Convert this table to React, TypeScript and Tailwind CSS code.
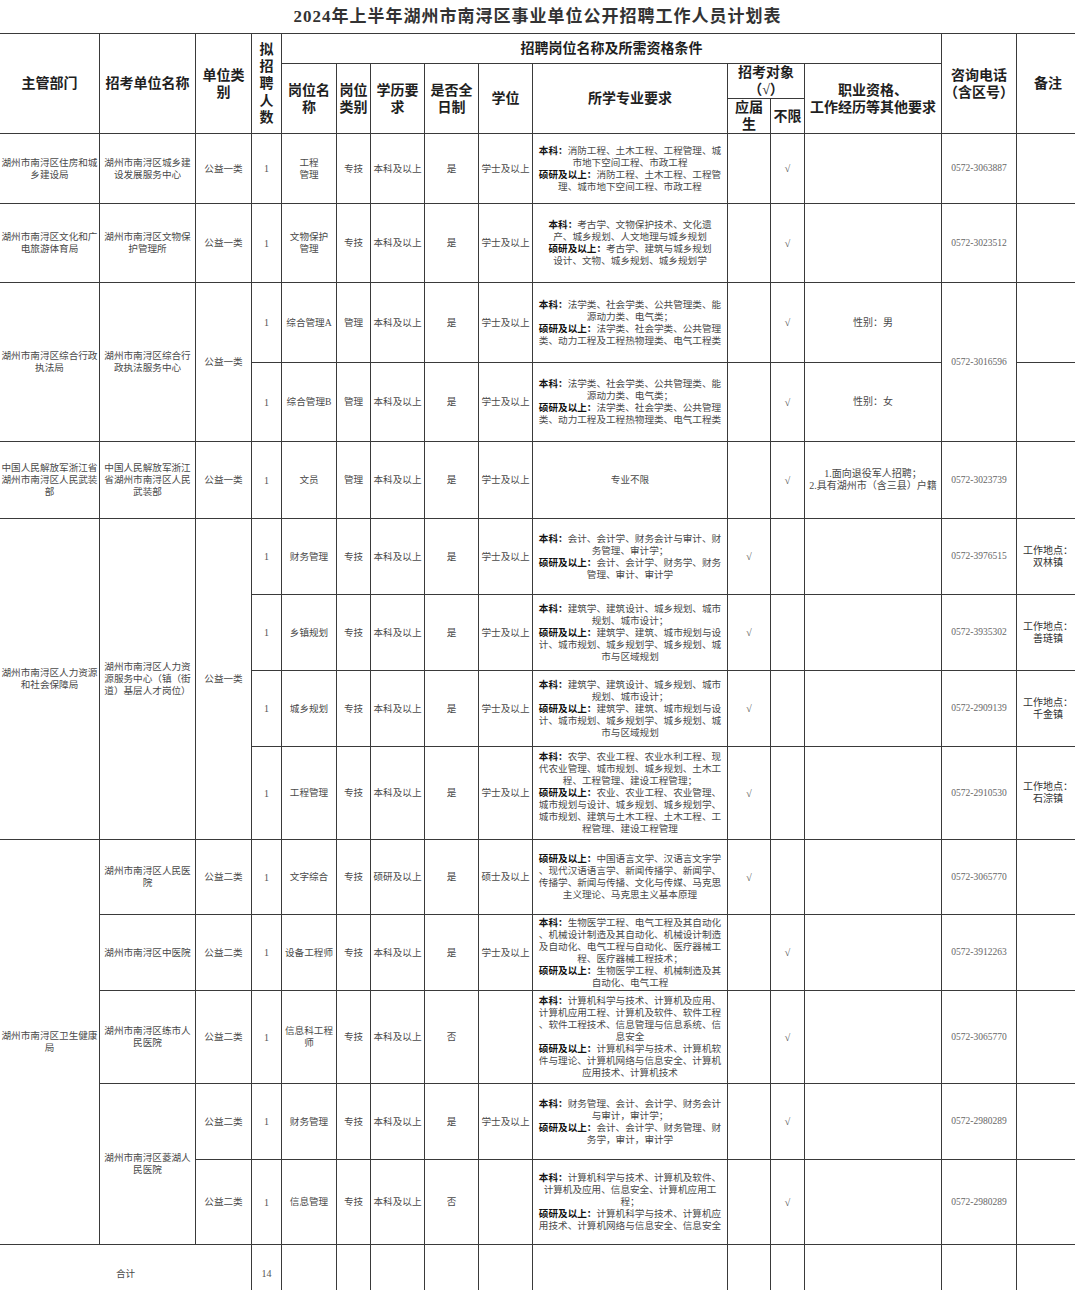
import React from 'react';

const C = 'border border-[#3a3a3a] p-0 text-center align-middle';
const T = C + ' text-[9.6px] leading-[12px] text-[#4a4a4a] whitespace-nowrap';
const H = C + ' text-[14px] leading-[17px] font-bold text-[#1f1f1f] whitespace-nowrap';
const P = C + " text-[9.5px] text-[#666] font-['Liberation_Serif',serif] whitespace-nowrap";
const N = C + " text-[10px] text-[#555] font-['Liberation_Serif',serif]";

function Lines({ lines }: { lines: string[] }) {
  return (
    <>
      {lines.map((l, i) => (
        <div key={i}>{l}</div>
      ))}
    </>
  );
}

function Major({ lines }: { lines: string[] }) {
  return (
    <>
      {lines.map((l, i) => {
        const m = l.match(/^(本科：|硕研及以上：)(.*)$/);
        return (
          <div key={i}>
            {m ? (
              <>
                <span className="font-bold text-[#111]">{m[1]}</span>
                {m[2]}
              </>
            ) : (
              l
            )}
          </div>
        );
      })}
    </>
  );
}

interface JobRow {
  count: string;
  name: string[];
  type: string;
  edu: string;
  fullTime: string;
  degree: string;
  major: string[];
  fresh: boolean;
  other?: string[];
}

function JobCells({ job }: { job: JobRow }) {
  return (
    <>
      <td className={N}>{job.count}</td>
      <td className={T}>
        <Lines lines={job.name} />
      </td>
      <td className={T}>{job.type}</td>
      <td className={T}>{job.edu}</td>
      <td className={T}>{job.fullTime}</td>
      <td className={T}>{job.degree}</td>
      <td className={T}>
        <Major lines={job.major} />
      </td>
      <td className={N}>{job.fresh ? '√' : ''}</td>
      <td className={N}>{job.fresh ? '' : '√'}</td>
      <td className={T + ' text-[10px]'}>{job.other && <Lines lines={job.other} />}</td>
    </>
  );
}

const PLAN_MAJOR = [
  '本科：建筑学、建筑设计、城乡规划、城市',
  '规划、城市设计；',
  '硕研及以上：建筑学、建筑、城市规划与设',
  '计、城市规划、城乡规划学、城乡规划、城',
  '市与区域规划',
];

const ADMIN_MAJOR = [
  '本科：法学类、社会学类、公共管理类、能',
  '源动力类、电气类；',
  '硕研及以上：法学类、社会学类、公共管理',
  '类、动力工程及工程热物理类、电气工程类',
];

export default function App() {
  return (
    <div className="h-[1290px] w-[1075px] overflow-hidden bg-white font-['Liberation_Serif','Noto_Sans_CJK_SC',serif]">
      <div className="flex h-[33px] items-center justify-center text-[17px] font-bold tracking-[1px] text-[#333]">
        2024年上半年湖州市南浔区事业单位公开招聘工作人员计划表
      </div>
      <table className="ml-[-1px] w-[1080px] table-fixed border-collapse">
        <colgroup>
          <col className="w-[100px]" />
          <col className="w-[96px]" />
          <col className="w-[56px]" />
          <col className="w-[30px]" />
          <col className="w-[55px]" />
          <col className="w-[34px]" />
          <col className="w-[54px]" />
          <col className="w-[54px]" />
          <col className="w-[54px]" />
          <col className="w-[195px]" />
          <col className="w-[43px]" />
          <col className="w-[34px]" />
          <col className="w-[137px]" />
          <col className="w-[75px]" />
          <col className="w-[63px]" />
        </colgroup>
        <thead>
          <tr className="h-[30px]">
            <th rowSpan={3} className={H}>主管部门</th>
            <th rowSpan={3} className={H}>招考单位名称</th>
            <th rowSpan={3} className={H}>
              <Lines lines={['单位类', '别']} />
            </th>
            <th rowSpan={3} className={H + ' leading-[16px]'}>
              <Lines lines={['拟', '招', '聘', '人', '数']} />
            </th>
            <th colSpan={9} className={H}>招聘岗位名称及所需资格条件</th>
            <th rowSpan={3} className={H}>
              <Lines lines={['咨询电话', '（含区号）']} />
            </th>
            <th rowSpan={3} className={H}>备注</th>
          </tr>
          <tr className="h-[35px]">
            <th rowSpan={2} className={H}>
              <Lines lines={['岗位名', '称']} />
            </th>
            <th rowSpan={2} className={H}>
              <Lines lines={['岗位', '类别']} />
            </th>
            <th rowSpan={2} className={H}>
              <Lines lines={['学历要', '求']} />
            </th>
            <th rowSpan={2} className={H}>
              <Lines lines={['是否全', '日制']} />
            </th>
            <th rowSpan={2} className={H}>学位</th>
            <th rowSpan={2} className={H}>所学专业要求</th>
            <th colSpan={2} className={H}>
              <Lines lines={['招考对象', '（√）']} />
            </th>
            <th rowSpan={2} className={H}>
              <Lines lines={['职业资格、', '工作经历等其他要求']} />
            </th>
          </tr>
          <tr className="h-[34px]">
            <th className={H}>
              <Lines lines={['应届', '生']} />
            </th>
            <th className={H}>不限</th>
          </tr>
        </thead>
        <tbody>
          <tr className="h-[70px]">
            <td className={T}>
              <Lines lines={['湖州市南浔区住房和城', '乡建设局']} />
            </td>
            <td className={T}>
              <Lines lines={['湖州市南浔区城乡建', '设发展服务中心']} />
            </td>
            <td className={T}>公益一类</td>
            <JobCells
              job={{
                count: '1',
                name: ['工程', '管理'],
                type: '专技',
                edu: '本科及以上',
                fullTime: '是',
                degree: '学士及以上',
                major: [
                  '本科：消防工程、土木工程、工程管理、城',
                  '市地下空间工程、市政工程',
                  '硕研及以上：消防工程、土木工程、工程管',
                  '理、城市地下空间工程、市政工程',
                ],
                fresh: false,
              }}
            />
            <td className={P}>0572-3063887</td>
            <td className={T}></td>
          </tr>
          <tr className="h-[79px]">
            <td className={T}>
              <Lines lines={['湖州市南浔区文化和广', '电旅游体育局']} />
            </td>
            <td className={T}>
              <Lines lines={['湖州市南浔区文物保', '护管理所']} />
            </td>
            <td className={T}>公益一类</td>
            <JobCells
              job={{
                count: '1',
                name: ['文物保护', '管理'],
                type: '专技',
                edu: '本科及以上',
                fullTime: '是',
                degree: '学士及以上',
                major: [
                  '本科：考古学、文物保护技术、文化遗',
                  '产、城乡规划、人文地理与城乡规划',
                  '硕研及以上：考古学、建筑与城乡规划',
                  '设计、文物、城乡规划、城乡规划学',
                ],
                fresh: false,
              }}
            />
            <td className={P}>0572-3023512</td>
            <td className={T}></td>
          </tr>
          <tr className="h-[80px]">
            <td rowSpan={2} className={T}>
              <Lines lines={['湖州市南浔区综合行政', '执法局']} />
            </td>
            <td rowSpan={2} className={T}>
              <Lines lines={['湖州市南浔区综合行', '政执法服务中心']} />
            </td>
            <td rowSpan={2} className={T}>公益一类</td>
            <JobCells
              job={{
                count: '1',
                name: ['综合管理A'],
                type: '管理',
                edu: '本科及以上',
                fullTime: '是',
                degree: '学士及以上',
                major: ADMIN_MAJOR,
                fresh: false,
                other: ['性别：男'],
              }}
            />
            <td rowSpan={2} className={P}>0572-3016596</td>
            <td className={T}></td>
          </tr>
          <tr className="h-[79px]">
            <JobCells
              job={{
                count: '1',
                name: ['综合管理B'],
                type: '管理',
                edu: '本科及以上',
                fullTime: '是',
                degree: '学士及以上',
                major: ADMIN_MAJOR,
                fresh: false,
                other: ['性别：女'],
              }}
            />
            <td className={T}></td>
          </tr>
          <tr className="h-[77px]">
            <td className={T}>
              <Lines lines={['中国人民解放军浙江省', '湖州市南浔区人民武装', '部']} />
            </td>
            <td className={T}>
              <Lines lines={['中国人民解放军浙江', '省湖州市南浔区人民', '武装部']} />
            </td>
            <td className={T}>公益一类</td>
            <JobCells
              job={{
                count: '1',
                name: ['文员'],
                type: '管理',
                edu: '本科及以上',
                fullTime: '是',
                degree: '学士及以上',
                major: ['专业不限'],
                fresh: false,
                other: ['1.面向退役军人招聘；', '2.具有湖州市（含三县）户籍'],
              }}
            />
            <td className={P}>0572-3023739</td>
            <td className={T}></td>
          </tr>
          <tr className="h-[76px]">
            <td rowSpan={4} className={T}>
              <Lines lines={['湖州市南浔区人力资源', '和社会保障局']} />
            </td>
            <td rowSpan={4} className={T}>
              <Lines lines={['湖州市南浔区人力资', '源服务中心（镇（街', '道）基层人才岗位）']} />
            </td>
            <td rowSpan={4} className={T}>公益一类</td>
            <JobCells
              job={{
                count: '1',
                name: ['财务管理'],
                type: '专技',
                edu: '本科及以上',
                fullTime: '是',
                degree: '学士及以上',
                major: [
                  '本科：会计、会计学、财务会计与审计、财',
                  '务管理、审计学；',
                  '硕研及以上：会计、会计学、财务学、财务',
                  '管理、审计、审计学',
                ],
                fresh: true,
              }}
            />
            <td className={P}>0572-3976515</td>
            <td className={T + ' text-[10px] text-[#333]'}>
              <Lines lines={['工作地点：', '双林镇']} />
            </td>
          </tr>
          <tr className="h-[76px]">
            <JobCells
              job={{
                count: '1',
                name: ['乡镇规划'],
                type: '专技',
                edu: '本科及以上',
                fullTime: '是',
                degree: '学士及以上',
                major: PLAN_MAJOR,
                fresh: true,
              }}
            />
            <td className={P}>0572-3935302</td>
            <td className={T + ' text-[10px] text-[#333]'}>
              <Lines lines={['工作地点：', '善琏镇']} />
            </td>
          </tr>
          <tr className="h-[76px]">
            <JobCells
              job={{
                count: '1',
                name: ['城乡规划'],
                type: '专技',
                edu: '本科及以上',
                fullTime: '是',
                degree: '学士及以上',
                major: PLAN_MAJOR,
                fresh: true,
              }}
            />
            <td className={P}>0572-2909139</td>
            <td className={T + ' text-[10px] text-[#333]'}>
              <Lines lines={['工作地点：', '千金镇']} />
            </td>
          </tr>
          <tr className="h-[93px]">
            <JobCells
              job={{
                count: '1',
                name: ['工程管理'],
                type: '专技',
                edu: '本科及以上',
                fullTime: '是',
                degree: '学士及以上',
                major: [
                  '本科：农学、农业工程、农业水利工程、现',
                  '代农业管理、城市规划、城乡规划、土木工',
                  '程、工程管理、建设工程管理；',
                  '硕研及以上：农业、农业工程、农业管理、',
                  '城市规划与设计、城乡规划、城乡规划学、',
                  '城市规划、建筑与土木工程、土木工程、工',
                  '程管理、建设工程管理',
                ],
                fresh: true,
              }}
            />
            <td className={P}>0572-2910530</td>
            <td className={T + ' text-[10px] text-[#333]'}>
              <Lines lines={['工作地点：', '石淙镇']} />
            </td>
          </tr>
          <tr className="h-[75px]">
            <td rowSpan={5} className={T}>
              <Lines lines={['湖州市南浔区卫生健康', '局']} />
            </td>
            <td className={T}>
              <Lines lines={['湖州市南浔区人民医', '院']} />
            </td>
            <td className={T}>公益二类</td>
            <JobCells
              job={{
                count: '1',
                name: ['文字综合'],
                type: '专技',
                edu: '硕研及以上',
                fullTime: '是',
                degree: '硕士及以上',
                major: [
                  '硕研及以上：中国语言文学、汉语言文字学',
                  '、现代汉语语言学、新闻传播学、新闻学、',
                  '传播学、新闻与传播、文化与传媒、马克思',
                  '主义理论、马克思主义基本原理',
                ],
                fresh: true,
              }}
            />
            <td className={P}>0572-3065770</td>
            <td className={T}></td>
          </tr>
          <tr className="h-[76px]">
            <td className={T}>湖州市南浔区中医院</td>
            <td className={T}>公益二类</td>
            <JobCells
              job={{
                count: '1',
                name: ['设备工程师'],
                type: '专技',
                edu: '本科及以上',
                fullTime: '是',
                degree: '学士及以上',
                major: [
                  '本科：生物医学工程、电气工程及其自动化',
                  '、机械设计制造及其自动化、机械设计制造',
                  '及自动化、电气工程与自动化、医疗器械工',
                  '程、医疗器械工程技术；',
                  '硕研及以上：生物医学工程、机械制造及其',
                  '自动化、电气工程',
                ],
                fresh: false,
              }}
            />
            <td className={P}>0572-3912263</td>
            <td className={T}></td>
          </tr>
          <tr className="h-[93px]">
            <td className={T}>
              <Lines lines={['湖州市南浔区练市人', '民医院']} />
            </td>
            <td className={T}>公益二类</td>
            <JobCells
              job={{
                count: '1',
                name: ['信息科工程', '师'],
                type: '专技',
                edu: '本科及以上',
                fullTime: '否',
                degree: '',
                major: [
                  '本科：计算机科学与技术、计算机及应用、',
                  '计算机应用工程、计算机及软件、软件工程',
                  '、软件工程技术、信息管理与信息系统、信',
                  '息安全',
                  '硕研及以上：计算机科学与技术、计算机软',
                  '件与理论、计算机网络与信息安全、计算机',
                  '应用技术、计算机技术',
                ],
                fresh: false,
              }}
            />
            <td className={P}>0572-3065770</td>
            <td className={T}></td>
          </tr>
          <tr className="h-[76px]">
            <td rowSpan={2} className={T}>
              <Lines lines={['湖州市南浔区菱湖人', '民医院']} />
            </td>
            <td className={T}>公益二类</td>
            <JobCells
              job={{
                count: '1',
                name: ['财务管理'],
                type: '专技',
                edu: '本科及以上',
                fullTime: '是',
                degree: '学士及以上',
                major: [
                  '本科：财务管理、会计、会计学、财务会计',
                  '与审计，审计学；',
                  '硕研及以上：会计、会计学、财务管理、财',
                  '务学，审计，审计学',
                ],
                fresh: false,
              }}
            />
            <td className={P}>0572-2980289</td>
            <td className={T}></td>
          </tr>
          <tr className="h-[85px]">
            <td className={T}>公益二类</td>
            <JobCells
              job={{
                count: '1',
                name: ['信息管理'],
                type: '专技',
                edu: '本科及以上',
                fullTime: '否',
                degree: '',
                major: [
                  '本科：计算机科学与技术、计算机及软件、',
                  '计算机及应用、信息安全、计算机应用工',
                  '程；',
                  '硕研及以上：计算机科学与技术、计算机应',
                  '用技术、计算机网络与信息安全、信息安全',
                ],
                fresh: false,
              }}
            />
            <td className={P}>0572-2980289</td>
            <td className={T}></td>
          </tr>
          <tr className="h-[70px]">
            <td colSpan={3} className={T + ' pb-[12px]'}>合计</td>
            <td className={N + ' pb-[12px]'}>14</td>
            <td className={T}></td>
            <td className={T}></td>
            <td className={T}></td>
            <td className={T}></td>
            <td className={T}></td>
            <td className={T}></td>
            <td className={T}></td>
            <td className={T}></td>
            <td className={T}></td>
            <td className={T}></td>
            <td className={T}></td>
          </tr>
        </tbody>
      </table>
    </div>
  );
}
